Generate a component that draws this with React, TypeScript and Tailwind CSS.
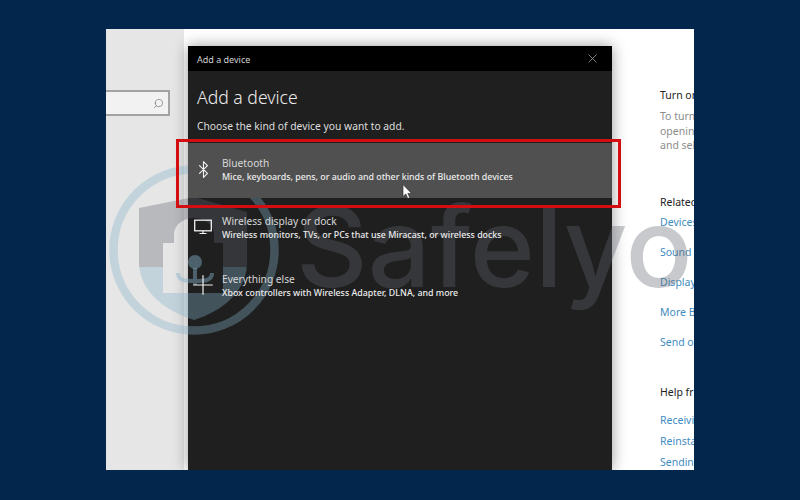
import { Search, X, Bluetooth, Plus } from "lucide-react";

function MonitorIcon() {
  return (
    <svg width="20" height="16" viewBox="0 0 20 16" fill="none" stroke="#f2f2f2">
      <rect x="1.7" y="1.2" width="16.6" height="10.6" strokeWidth="1.3" />
      <path d="M10 12 V14.5 M6.5 14.5 H13.5" strokeWidth="1.2" />
    </svg>
  );
}

const OPTIONS = [
  { title: "Bluetooth", desc: "Mice, keyboards, pens, or audio and other kinds of Bluetooth devices", icon: <Bluetooth size={19} strokeWidth={1.4} className="text-[#f2f2f2]" />, active: true },
  { title: "Wireless display or dock", desc: "Wireless monitors, TVs, or PCs that use Miracast, or wireless docks", icon: <MonitorIcon />, active: false },
  { title: "Everything else", desc: "Xbox controllers with Wireless Adapter, DLNA, and more", icon: <Plus size={32} strokeWidth={0.9} className="text-[#f2f2f2] shrink-0" />, active: false },
];

const RELATED = ["Devices", "Sound", "Display", "More B", "Send o"];
const HELP = ["Receivi", "Reinsta", "Sending"];

const SHIELD =
  "M194 197 L247 212 V262 C247 292 222 311 194 320 C166 311 139 292 139 262 V208 Z " +
  "M163 293 H223 V243 H214 V234 A20 16 0 0 0 174 234 V243 H163 Z";

function Watermark() {
  return (
    <div className="absolute left-0 top-0 w-[800px] h-[500px] overflow-hidden pointer-events-none">
      <svg width="800" height="500" className="absolute left-0 top-0">
        <defs>
          <clipPath id="shield-top"><rect x="130" y="190" width="130" height="77" /></clipPath>
          <clipPath id="shield-bottom"><rect x="130" y="267" width="130" height="60" /></clipPath>
        </defs>
        <circle cx="194" cy="250" r="80.5" fill="none" stroke="#86b1ca" strokeOpacity="0.36" strokeWidth="8.5" />
        <path d={SHIELD} fillRule="evenodd" fill="#61646e" fillOpacity="0.34" clipPath="url(#shield-top)" />
        <path d={SHIELD} fillRule="evenodd" fill="#86b1ca" fillOpacity="0.36" clipPath="url(#shield-bottom)" />
        <circle cx="195" cy="262" r="7" fill="#86b1ca" fillOpacity="0.45" />
        <path d="M195 268 V285 M178 273 C178 281 186 281 195 281 C204 281 212 281 212 273" fill="none" stroke="#86b1ca" strokeOpacity="0.45" strokeWidth="4" />
      </svg>
      <div className="absolute left-[296px] top-[187px] text-[111px] leading-[120px] font-medium whitespace-nowrap text-[#61646e]/35 font-['Inter',sans-serif]">
        Safelyo
      </div>
    </div>
  );
}

export default function App() {
  return (
    <div className="relative w-[800px] h-[500px] overflow-hidden bg-[#03264d] font-['Noto_Sans','Open_Sans',sans-serif]">
      <div className="pt-[29px] pl-[106px]">
        <div className="flex w-[588px] h-[441px] bg-white overflow-hidden">
          {/* settings sidebar */}
          <div className="w-[78px] shrink-0 bg-[#e6e6e6] pt-[61px]">
            <div className="flex items-center justify-end w-[64px] h-[26px] bg-[#f2f2f2] border-2 border-l-0 border-[#a3a3a3] pr-[4px]">
              <Search size={11} strokeWidth={1.5} className="text-[#777] -scale-x-100" />
            </div>
          </div>

          {/* add a device dialog */}
          <div className="w-[428px] shrink-0 pl-1 pt-[17px]">
            <div className="w-[424px] h-[424px] bg-[#1f1f1f] text-white shadow-[0_0_14px_rgba(0,0,0,0.4)]">
              <div className="flex items-center justify-between h-[25px] bg-black pl-[9px] pr-[12px] text-[9px] text-[#d0d0d0]">
                <span className="translate-y-px">Add a device</span>
                <X size={15} strokeWidth={1} className="text-[#c4c4c4]" />
              </div>
              <div className="pl-[9px] pt-[13px] h-[47px] text-[17.6px] leading-[26px] font-light text-[#ececec]">Add a device</div>
              <div className="pl-[9px] h-[25px] text-[10.3px] leading-[16px] text-[#dedede]">Choose the kind of device you want to add.</div>
              {OPTIONS.map(({ title, desc, icon, active }) => (
                <div
                  key={title}
                  className={`relative z-10 flex items-center h-[55px] mb-[3px] pl-[5px] pb-[3px] ${active ? "bg-[#505050]" : ""}`}
                >
                  <div className="flex items-center justify-center w-[20px] shrink-0 mr-[9px]">{icon}</div>
                  <div>
                    <div className="text-[10.2px] leading-[14px] mb-px text-[#d8d8d8]">{title}</div>
                    <div className="text-[8.85px] leading-[12px] font-medium text-[#ececec]">{desc}</div>
                  </div>
                </div>
              ))}
            </div>
          </div>

          {/* related settings column, cut off by the crop */}
          <div className="flex-1 min-w-0 overflow-hidden whitespace-nowrap pl-[48px] pt-[59px] text-[10.5px]">
            <div className="leading-[14px] text-[#222]">Turn on</div>
            <div className="mt-[7px] leading-[14.5px] text-[#8c8c8c]">
              <div>To turn</div>
              <div>openin</div>
              <div>and sel</div>
            </div>
            <div className="mt-[42px] leading-[14px] text-[#222]">Related</div>
            <div className="mt-[6px] flex flex-col gap-[16px] leading-[14px] text-[#3f8cc0]">
              {RELATED.map((r) => <div key={r}>{r}</div>)}
            </div>
            <div className="mt-[36px] leading-[14px] text-[#222]">Help fr</div>
            <div className="mt-[14px] flex flex-col gap-[7px] leading-[14px] text-[#3f8cc0]">
              {HELP.map((h) => <div key={h}>{h}</div>)}
            </div>
          </div>
        </div>
      </div>

      <Watermark />

      {/* red highlight */}
      <div className="absolute left-[176px] top-[139px] z-20 w-[445px] h-[69px] border-[3px] border-[#d40d12]" />

      {/* cursor */}
      <svg width="12" height="16" viewBox="0 0 12 16" className="absolute left-[402px] top-[184px] z-20">
        <path d="M1 0.5 V12.5 L3.8 10 L5.8 14.5 L7.8 13.6 L5.8 9.4 H9.5 Z" fill="#fff" stroke="#222" strokeWidth="0.6" />
      </svg>
    </div>
  );
}
